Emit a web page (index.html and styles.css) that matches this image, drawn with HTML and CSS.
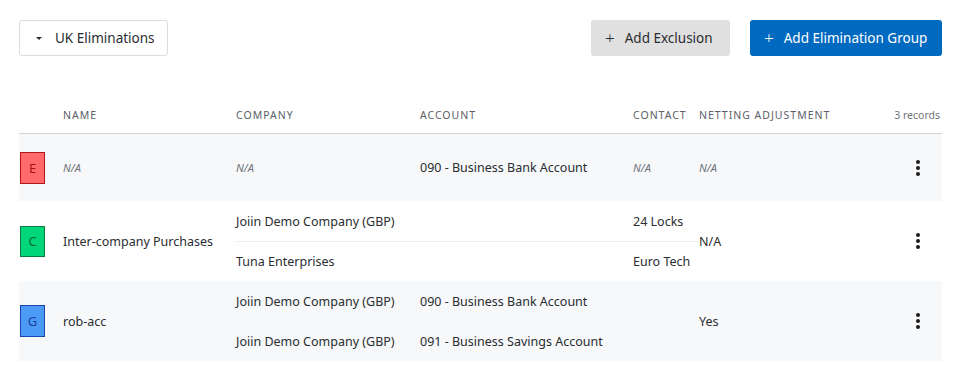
FILE: index.html
```html
<!DOCTYPE html>
<html lang="en">
<head>
  <meta charset="UTF-8" />
  <meta name="viewport" content="width=device-width, initial-scale=1.0"/>
  <title>UK Eliminations</title>
  <link rel="stylesheet" href="styles.css">
</head>
<body>
  <div class="page">
    <div class="toolbar">
      <button class="dropdown"><span class="caret"></span>UK Eliminations</button>
      <div class="actions">
        <button class="btn btn-grey"><span class="plus">+</span>Add Exclusion</button>
        <button class="btn btn-blue"><span class="plus">+</span>Add Elimination Group</button>
      </div>
    </div>

    <div class="table">
      <div class="row head">
        <div></div>
        <div>Name</div>
        <div class="sub-head">
          <div>Company</div>
          <div>Account</div>
          <div>Contact</div>
        </div>
        <div>Netting Adjustment</div>
        <div class="count">3 records</div>
      </div>

      <div class="row shaded single">
        <div><span class="badge badge-e">E</span></div>
        <div class="na">N/A</div>
        <div class="subs">
          <div class="sub">
            <div class="na">N/A</div>
            <div>090 - Business Bank Account</div>
            <div class="na">N/A</div>
          </div>
        </div>
        <div class="na">N/A</div>
        <div class="menu"><span class="kebab"><i></i><i></i><i></i></span></div>
      </div>

      <div class="row">
        <div><span class="badge badge-c">C</span></div>
        <div>Inter-company Purchases</div>
        <div class="subs">
          <div class="sub">
            <div>Joiin Demo Company (GBP)</div>
            <div></div>
            <div>24 Locks</div>
          </div>
          <div class="sub lined">
            <div>Tuna Enterprises</div>
            <div></div>
            <div>Euro Tech</div>
          </div>
        </div>
        <div>N/A</div>
        <div class="menu"><span class="kebab"><i></i><i></i><i></i></span></div>
      </div>

      <div class="row shaded">
        <div><span class="badge badge-g">G</span></div>
        <div>rob-acc</div>
        <div class="subs">
          <div class="sub">
            <div>Joiin Demo Company (GBP)</div>
            <div>090 - Business Bank Account</div>
            <div></div>
          </div>
          <div class="sub">
            <div>Joiin Demo Company (GBP)</div>
            <div>091 - Business Savings Account</div>
            <div></div>
          </div>
        </div>
        <div>Yes</div>
        <div class="menu"><span class="kebab"><i></i><i></i><i></i></span></div>
      </div>
    </div>
  </div>
</body>
</html>
```

FILE: styles.css
```css
:root {
  --text: #2a2d31;
  --muted: #6f737b;
  --shade: #f7f8fa;
  --line: #d3d5d9;
  --blue: #0069c0;
}

* {
  box-sizing: border-box;
  margin: 0;
  padding: 0;
}

html, body {
  font-family: 'Noto Sans', sans-serif;
  background: #fff;
  color: var(--text);
}

.page {
  width: 923px;
  margin-left: 19px;
  padding-top: 20px;
}

.toolbar {
  display: flex;
  justify-content: space-between;
  align-items: center;
}

.actions {
  display: flex;
  gap: 20px;
}

button {
  font-family: inherit;
  font-size: 13.5px;
  height: 36px;
  border-radius: 3px;
  display: flex;
  align-items: center;
  white-space: nowrap;
  cursor: pointer;
}

.dropdown {
  width: 149px;
  background: #fff;
  border: 1px solid #dcdcdc;
  color: var(--text);
  padding-left: 16px;
}

.caret {
  width: 0;
  height: 0;
  border-left: 3px solid transparent;
  border-right: 3px solid transparent;
  border-top: 3px solid var(--text);
  margin-right: 13px;
}

.btn {
  border: none;
  padding: 0 0 0 14px;
}

.plus {
  font-size: 17px;
  font-weight: 300;
  margin-right: 10px;
  line-height: 1;
  margin-top: -2px;
}

.btn-grey {
  width: 139px;
  background: #e0e0e0;
  color: var(--text);
}

.btn-blue {
  width: 192px;
  background: var(--blue);
  color: #fff;
}

.table {
  margin-top: 41px;
}

.row {
  display: grid;
  grid-template-columns: 44px 173px 463px 1fr 60px;
  align-items: center;
  font-size: 12.5px;
}

.head {
  height: 37px;
  border-bottom: 1px solid var(--line);
  font-size: 10.5px;
  letter-spacing: 1px;
  text-transform: uppercase;
  color: #5c6068;
  padding-bottom: 1px;
}

.sub-head,
.sub {
  display: grid;
  grid-template-columns: 184px 213px 66px;
  align-items: center;
}

.count {
  text-transform: none;
  letter-spacing: 0;
  text-align: right;
  padding-right: 2px;
  color: var(--muted);
}

.shaded {
  background: var(--shade);
}

.row:not(.head) {
  min-height: 80px;
}

.single {
  min-height: 67px !important;
}

.sub {
  height: 40px;
}

.lined {
  border-top: 1px solid #eceef1;
}

.na {
  font-style: italic;
  font-size: 11px;
  color: var(--muted);
}

.badge {
  display: flex;
  align-items: center;
  justify-content: center;
  width: 25px;
  height: 32px;
  margin-left: 1px;
  font-size: 13px;
  border: 1px solid;
}

.badge-e {
  background: #ff6a6a;
  border-color: #b3141d;
  color: #a6121a;
}

.badge-c {
  background: #00d67a;
  border-color: #0c7a3e;
  color: #0a6a35;
  height: 31px;
}

.badge-g {
  background: #4b9bf6;
  border-color: #1a45b0;
  color: #1a3fa0;
}

.menu {
  display: flex;
  justify-content: flex-end;
  padding-right: 22px;
}

.kebab {
  display: flex;
  flex-direction: column;
  gap: 2px;
}

.kebab i {
  width: 4px;
  height: 4px;
  border-radius: 50%;
  background: #1c1c1c;
}
```
